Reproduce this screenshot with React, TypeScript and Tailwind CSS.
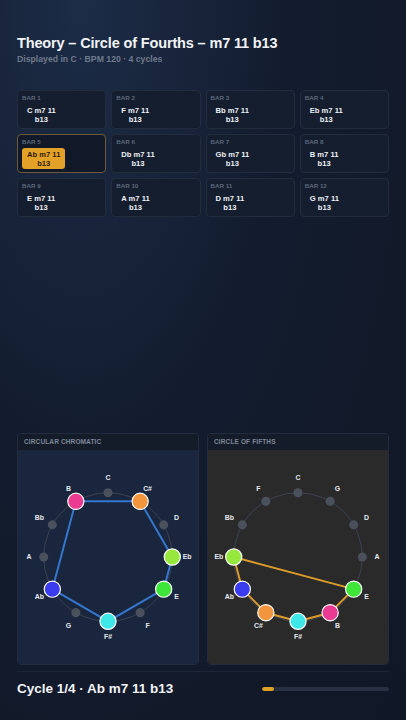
const CHORD = 'm7 11'
const bars = ['C', 'F', 'Bb', 'Eb', 'Ab', 'Db', 'Gb', 'B', 'E', 'A', 'D', 'G']
const ACTIVE_BAR = 4

const NOTE_COLORS: Record<string, string> = {
  B: '#ea3a92',
  'C#': '#f2953c',
  Eb: '#97e83c',
  E: '#3fe63a',
  'F#': '#3ee8e8',
  Ab: '#3b3bef'
}

const CHROMATIC = ['C', 'C#', 'D', 'Eb', 'E', 'F', 'F#', 'G', 'Ab', 'A', 'Bb', 'B']
const FIFTHS = ['C', 'G', 'D', 'A', 'E', 'B', 'F#', 'C#', 'Ab', 'Eb', 'Bb', 'F']

function NoteCircle({ order, stroke }: { order: string[]; stroke: string }) {
  const cx = 91
  const cy = 108
  const r = 65
  const lr = 80
  const pos = (i: number, rad: number) => {
    const a = (i * 30 * Math.PI) / 180
    return { x: cx + rad * Math.sin(a), y: cy - rad * Math.cos(a) }
  }
  const active = order.map((n, i) => ({ n, i })).filter(o => NOTE_COLORS[o.n])
  const pts = active.map(o => pos(o.i, r))
  const poly = pts.map(p => `${p.x},${p.y}`).join(' ')

  return (
    <svg viewBox="0 0 182 216" className="w-full h-full">
      <circle cx={cx} cy={cy} r={r} fill="none" stroke="#3c4352" strokeWidth="1" />
      <polygon points={poly} fill="none" stroke={stroke} strokeWidth="2" strokeLinejoin="round" />
      {order.map((n, i) => {
        const p = pos(i, r)
        const l = pos(i, lr)
        const color = NOTE_COLORS[n]
        return (
          <g key={n}>
            {color ? (
              <circle cx={p.x} cy={p.y} r="8.2" fill={color} stroke="#ffffff" strokeWidth="1.2" />
            ) : (
              <circle cx={p.x} cy={p.y} r="4.6" fill="#4a505c" />
            )}
            <text
              x={l.x}
              y={l.y}
              textAnchor="middle"
              dominantBaseline="central"
              fill="#e6e9ee"
              fontSize="7"
              fontWeight="700"
              fontFamily="'Liberation Sans', Arial, sans-serif"
            >
              {n}
            </text>
          </g>
        )
      })}
    </svg>
  )
}

function Panel({ title, bodyClass, children }: { title: string; bodyClass: string; children: React.ReactNode }) {
  return (
    <div className="flex-1 flex flex-col rounded-[4px] border border-[#232c3c] overflow-hidden">
      <div className="h-[16px] flex items-center px-[6px] bg-[#151c29] text-[6.5px] font-bold tracking-[0.02em] text-[#7d8798]">
        {title}
      </div>
      <div className={`flex-1 ${bodyClass}`}>{children}</div>
    </div>
  )
}

export default function App() {
  return (
    <div
      className="h-[720px] w-full flex flex-col px-[17px] bg-[radial-gradient(ellipse_at_20%_0%,#1c2c47_0%,#131c2e_45%,#101726_100%)] text-white"
      style={{ fontFamily: "'Liberation Sans', Arial, sans-serif" }}
    >
      <header className="pt-[34px]">
        <h1 className="text-[14.5px] leading-[18px] font-bold tracking-[-0.01em] text-[#f1f3f6]">
          Theory – Circle of Fourths – m7 11 b13
        </h1>
        <p className="mt-[1px] text-[8.7px] leading-[12px] font-bold text-[#6f7a8c]">
          Displayed in C · BPM 120 · 4 cycles
        </p>
      </header>

      <section className="mt-[25px] grid grid-cols-4 gap-x-[5px] gap-y-[5px]">
        {bars.map((root, i) => {
          const active = i === ACTIVE_BAR
          return (
            <div
              key={i}
              className={`h-[39px] rounded-[4px] border px-[4px] pt-[3px] flex flex-col ${
                active ? 'border-[#6e5a3a] bg-[#111827]' : 'border-[#222c3d] bg-[#151e2f]'
              }`}
            >
              <span className="text-[6.2px] leading-[8px] font-bold text-[#5d687a]">BAR {i + 1}</span>
              <div className="mt-[2px] flex">
                <div
                  className={`rounded-[3px] px-[5px] py-[1.5px] text-center text-[7.6px] leading-[9px] font-bold ${
                    active ? 'bg-[#e4a128] text-[#2b1c06]' : 'text-[#eef1f5]'
                  }`}
                >
                  {root} {CHORD}
                  <br />
                  b13
                </div>
              </div>
            </div>
          )
        })}
      </section>

      <div className="flex-1" />

      <section className="h-[232px] flex gap-[8px]">
        <Panel title="CIRCULAR CHROMATIC" bodyClass="bg-[#19263d]">
          <NoteCircle order={CHROMATIC} stroke="#3577cf" />
        </Panel>
        <Panel title="CIRCLE OF FIFTHS" bodyClass="bg-[#2a2a2b]">
          <NoteCircle order={FIFTHS} stroke="#dc9b2a" />
        </Panel>
      </section>

      <footer className="mt-[6px] h-[49px] border-t border-[#1d2638] pt-[8px] flex items-start justify-between">
        <span className="text-[13.5px] leading-[18px] font-bold text-[#f1f3f6]">Cycle 1/4 · Ab m7 11 b13</span>
        <div className="mt-[7px] w-[127px] h-[4px] rounded-full bg-[#283144] overflow-hidden">
          <div className="h-full w-[12px] rounded-full bg-[#e0a125]" />
        </div>
      </footer>
    </div>
  )
}
